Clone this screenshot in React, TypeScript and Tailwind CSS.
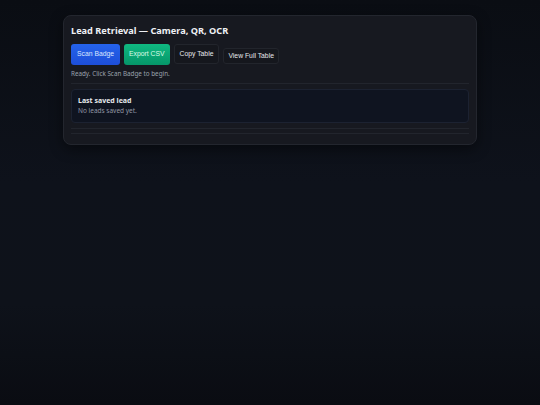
import React from "react";

export default function App() {
  return (
    <div className="min-h-screen w-full bg-[linear-gradient(180deg,#0a0d13_0%,#0e121b_45%,#0e121a_75%,#0a0c12_100%)] pt-[15px] font-['Noto_Sans',sans-serif]">
      <div className="mx-auto w-[414px] rounded-[8px] border border-[#23262e] bg-[#171920] px-[7px] pt-[8px] pb-[10px] shadow-[0_4px_14px_rgba(0,0,0,0.45)]">
        <h1 className="text-[9.2px] font-bold leading-[14px] text-[#eef0f4]">
          Lead Retrieval — Camera, QR, OCR
        </h1>
        <div className="mt-[6px] flex items-start gap-[4px] font-['Liberation_Sans',Arial,sans-serif] text-[6.8px]">
          <button className="h-[21px] rounded-[3px] bg-[linear-gradient(180deg,#2563eb,#1d4ed8)] px-[6px] text-[#dbe6ff]">
            Scan Badge
          </button>
          <button className="h-[21px] rounded-[3px] bg-[linear-gradient(180deg,#10b981,#059669)] px-[5px] text-[#dcfce7]">
            Export CSV
          </button>
          <button className="h-[20px] rounded-[3px] border border-[#22252c] bg-[#15171d] px-[5px] text-[#e5e7eb]">
            Copy Table
          </button>
          <button className="mt-[4px] h-[16px] rounded-[3px] border border-[#22252c] bg-[#15171d] px-[4px] text-[#e5e7eb]">
            View Full Table
          </button>
        </div>
        <p className="mt-[5px] text-[6.3px] leading-[8px] text-[#9aa1ad]">
          Ready. Click Scan Badge to begin.
        </p>
        <div className="mt-[5px] border-t border-[#22252d]" />
        <div className="mt-[5px] rounded-[4px] border border-[#1c2231] bg-[#0f1420] px-[6px] pt-[7px] pb-[7px]">
          <div className="text-[7px] font-bold leading-[8px] text-[#e6e8ec]">Last saved lead</div>
          <div className="mt-[2px] text-[6.5px] leading-[8px] text-[#8f96a3]">No leads saved yet.</div>
        </div>
        <div className="mt-[5px] h-[6px] border-y border-[#22252d]" />
      </div>
    </div>
  );
}
